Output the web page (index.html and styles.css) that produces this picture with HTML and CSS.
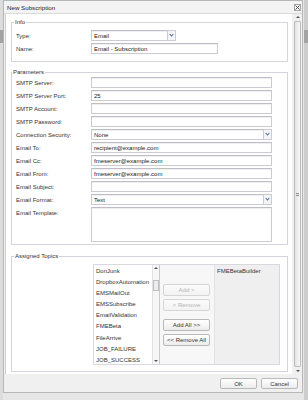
FILE: index.html
```html
<!DOCTYPE html>
<html lang="en">
<head>
    <meta charset="UTF-8">
    <meta name="viewport" content="width=device-width, initial-scale=1.0">
    <title>New Subscription</title>
    <link rel="stylesheet" href="styles.css">
</head>
<body>

<div class="page">
    <div class="edge edge-left"><span class="edge-mark"></span></div>

    <div class="dialog">
        <div class="titlebar">
            <span class="title">New Subscription</span>
            <span class="close">
                <svg width="5" height="5" viewBox="0 0 5 5"><path d="M0.5 0.5L4.5 4.5M4.5 0.5L0.5 4.5" stroke="#555" stroke-width="1"/></svg>
            </span>
        </div>

        <div class="body">
            <div class="content">
                <fieldset class="group group-info">
                    <legend>Info</legend>
                    <div class="rows">
                        <label>Type:</label>
                        <div class="combo combo-short"><input type="text" value="Email" readonly><span class="trigger"></span></div>
                        <label>Name:</label>
                        <input type="text" class="field field-name" value="Email - Subscription">
                    </div>
                </fieldset>

                <fieldset class="group group-params">
                    <legend>Parameters</legend>
                    <div class="rows">
                        <label>SMTP Server:</label>
                        <input type="text" class="field" value="">
                        <label>SMTP Server Port:</label>
                        <input type="text" class="field" value="25">
                        <label>SMTP Account:</label>
                        <input type="text" class="field" value="">
                        <label>SMTP Password:</label>
                        <input type="text" class="field" value="">
                        <label>Connection Security:</label>
                        <div class="combo"><input type="text" value="None" readonly><span class="trigger"></span></div>
                        <label>Email To:</label>
                        <input type="text" class="field" value="recipient@example.com">
                        <label>Email Cc:</label>
                        <input type="text" class="field" value="fmeserver@example.com">
                        <label>Email From:</label>
                        <input type="text" class="field" value="fmeserver@example.com">
                        <label>Email Subject:</label>
                        <input type="text" class="field" value="">
                        <label>Email Format:</label>
                        <div class="combo"><input type="text" value="Text" readonly><span class="trigger"></span></div>
                        <label class="label-top">Email Template:</label>
                        <textarea class="field field-area"></textarea>
                    </div>
                </fieldset>

                <fieldset class="group group-topics">
                    <legend>Assigned Topics</legend>
                    <div class="picker">
                        <div class="list list-left">
                            <ul class="items">
                                <li>DonJunk</li>
                                <li>DropboxAutomation</li>
                                <li>EMSMailOut</li>
                                <li>EMSSubscribe</li>
                                <li>EmailValidation</li>
                                <li>FMEBeta</li>
                                <li>FileArrive</li>
                                <li>JOB_FAILURE</li>
                                <li>JOB_SUCCESS</li>
                            </ul>
                            <div class="mini-scroll">
                                <span class="arrow-up"></span>
                                <span class="mini-thumb"></span>
                                <span class="arrow-down"></span>
                            </div>
                        </div>
                        <div class="picker-buttons">
                            <button class="btn" disabled>Add &gt;</button>
                            <button class="btn" disabled>&lt; Remove</button>
                            <button class="btn btn-gap">Add All &gt;&gt;</button>
                            <button class="btn">&lt;&lt; Remove All</button>
                        </div>
                        <div class="list list-right">
                            <ul class="items">
                                <li>FMEBetaBuilder</li>
                            </ul>
                        </div>
                    </div>
                </fieldset>
            </div>

            <div class="vscroll">
                <span class="arrow-up"></span>
                <span class="thumb"><span class="grip"></span></span>
                <span class="arrow-down"></span>
            </div>
        </div>

        <div class="footer">
            <button class="btn btn-footer">OK</button>
            <button class="btn btn-footer">Cancel</button>
        </div>
    </div>

    <div class="edge edge-right"><span class="edge-mark"></span></div>
</div>

</body>
</html>
```

FILE: styles.css
```css
* {
    box-sizing: border-box;
}
body {
    margin: 0;
    background-color: #e6e6e6;
    font-family: "Liberation Sans", Arial, sans-serif;
    font-size: 6px;
    color: #333;
}
.page {
    display: flex;
    height: 400px;
    align-items: flex-start;
}
.edge {
    width: 3px;
    height: 400px;
    padding-top: 30px;
    background-color: #dcdcdc;
}
.edge-mark {
    display: block;
    height: 13px;
    background-color: #a3a3a3;
}
.edge-right {
    width: 4px;
    margin-left: 1px;
    background-color: #cdcdcd;
}

.dialog {
    width: 300px;
    height: 393px;
    border: 1px solid #b7b7b7;
    background-color: #f1f1f1;
    display: flex;
    flex-direction: column;
}
.titlebar {
    height: 13px;
    flex-shrink: 0;
    display: flex;
    align-items: center;
    justify-content: space-between;
    padding: 0 1px 0 3px;
    border-bottom: 1px solid #dadada;
    background-color: #f3f3f3;
}
.title {
    font-size: 6.2px;
    color: #222;
}
.close {
    width: 7px;
    height: 7px;
    border: 1px solid #a5a5a5;
    background-color: #f7f7f7;
    display: flex;
    align-items: center;
    justify-content: center;
}
.close svg {
    display: block;
}

.body {
    flex: 1;
    display: flex;
    padding-left: 1px;
    min-height: 0;
}
.content {
    width: 287px;
    border-left: 1px solid #cfcfcf;
    background-color: #fff;
    overflow: hidden;
}

.group {
    margin: 0 4px 0 5px;
    border: 1px solid #d4d4dc;
    padding: 0 14px 0 4px;
    min-width: 0;
}
.group legend {
    font-size: 6px;
    line-height: 8px;
    padding: 0 1px;
    margin-left: -2px;
    color: #333;
}
.group-info {
    margin-top: 4px;
    padding-top: 4px;
    padding-bottom: 7px;
}
.group-params {
    margin-top: 6px;
    padding-top: 1px;
    padding-bottom: 2px;
}
.group-params legend {
    margin-left: -4px;
}
.group-topics {
    margin-top: 7px;
    padding-top: 4px;
    padding-bottom: 6px;
}

.rows {
    display: grid;
    grid-template-columns: 75px 1fr;
    row-gap: 2px;
    align-items: center;
}
.rows label {
    line-height: 11px;
    height: 11px;
    white-space: nowrap;
    padding-top: 1px;
}
.rows .label-top {
    align-self: start;
}

.field,
.combo input {
    height: 11px;
    border: 1px solid #cbcbd4;
    border-top-color: #bdbdc8;
    background-color: #fff;
    font-family: "Liberation Sans", Arial, sans-serif;
    font-size: 6px;
    color: #222;
    padding: 0 2px;
    margin: 0;
    box-shadow: inset 0 1px 0 #f0f0f3;
    outline: none;
}
.field {
    width: 181px;
}
.field-name {
    width: 127px;
}
.field-area {
    height: 35px;
    resize: none;
    display: block;
}
.combo {
    display: flex;
    width: 181px;
    height: 11px;
}
.combo-short {
    width: 85px;
}
.combo input {
    flex: 1;
    min-width: 0;
    border-right: none;
}
.trigger {
    width: 9px;
    height: 11px;
    border: 1px solid #cbcbd4;
    background-color: #f4f4f6;
    position: relative;
}
.trigger::after {
    content: "";
    position: absolute;
    left: 2px;
    top: 2px;
    width: 2px;
    height: 2px;
    border-right: 1px solid #4b6b9c;
    border-bottom: 1px solid #4b6b9c;
    transform: rotate(45deg);
}

.picker {
    display: flex;
    margin-left: 77px;
    width: 187px;
    height: 101px;
    border: 1px solid #d8d8de;
    background-color: #f1f1f1;
}
.list {
    height: 100%;
}
.list-left {
    width: 66px;
    display: flex;
    border-right: 1px solid #c9c9d1;
    background-color: #fff;
}
.list-right {
    flex: 1;
    background-color: #efefef;
    border-left: 1px solid #e2e2e6;
}
.items {
    list-style: none;
    margin: 0;
    padding: 1px 0 0 2px;
    flex: 1;
    min-width: 0;
    overflow: hidden;
}
.items li {
    line-height: 11.1px;
    white-space: nowrap;
    overflow: hidden;
    color: #333;
}
.mini-scroll {
    width: 7px;
    display: flex;
    flex-direction: column;
    align-items: center;
    border-left: 1px solid #e2e2e2;
    background-color: #f6f6f6;
    padding: 2px 0;
}
.mini-thumb {
    width: 6px;
    height: 11px;
    margin-top: 11px;
    border: 1px solid #bfbfbf;
    background-color: #ececec;
    flex-shrink: 0;
}
.mini-scroll .arrow-down {
    margin-top: auto;
}

.picker-buttons {
    width: 54px;
    padding: 19px 0 0 3px;
    display: flex;
    flex-direction: column;
    gap: 3px;
    background-color: #f7f7f7;
}
.btn {
    font-family: "Liberation Sans", Arial, sans-serif;
    font-size: 6px;
    color: #333;
    height: 12px;
    width: 47px;
    padding: 0;
    border: 1px solid #b9b9b9;
    border-radius: 2px;
    background: linear-gradient(#ffffff, #ececec);
    cursor: pointer;
}
.btn:disabled {
    color: #b5b5b5;
    border-color: #d6d6d6;
    background: linear-gradient(#fbfbfb, #f3f3f3);
}
.btn-gap {
    margin-top: 5px;
}

.vscroll {
    width: 7px;
    margin-left: 2px;
    display: flex;
    flex-direction: column;
    align-items: center;
    padding: 2px 0 2px;
    background-color: #efefef;
}
.thumb {
    width: 7px;
    flex: 1;
    margin: 3px 0;
    border: 1px solid #bdbdbd;
    border-radius: 1px;
    background: linear-gradient(90deg, #e3e3e3, #f7f7f7);
    display: flex;
    align-items: center;
    justify-content: center;
}
.grip {
    width: 3px;
    height: 3px;
    border-top: 1px solid #8a8a8a;
    border-bottom: 1px solid #8a8a8a;
}
.arrow-up,
.arrow-down {
    width: 0;
    height: 0;
    border-left: 2px solid transparent;
    border-right: 2px solid transparent;
    flex-shrink: 0;
}
.arrow-up {
    border-bottom: 2px solid #555;
}
.arrow-down {
    border-top: 2px solid #555;
}

.footer {
    height: 18px;
    flex-shrink: 0;
    display: flex;
    justify-content: flex-end;
    align-items: flex-start;
    gap: 4px;
    padding: 4px 4px 0 0;
    background-color: #f0f0f0;
}
.btn-footer {
    width: 37px;
    height: 11px;
}
```
